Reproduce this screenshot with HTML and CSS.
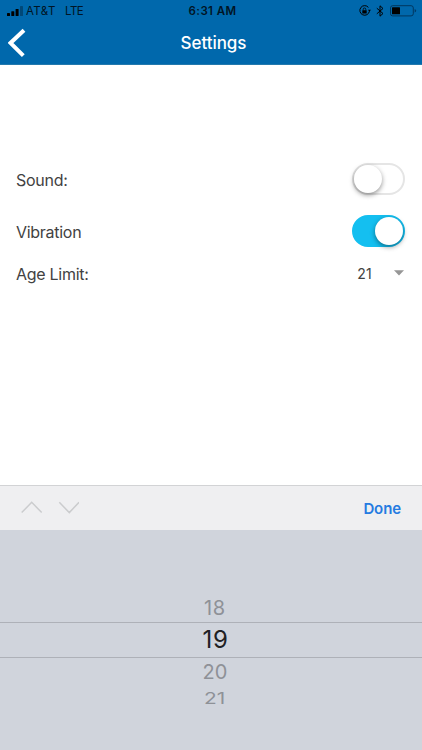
FILE: index.html
```html
<!DOCTYPE html>
<html lang="en">
<head>
<meta charset="utf-8">
<title>Settings</title>
<link rel="stylesheet" href="styles.css">
</head>
<body>
<div class="screen">
  <header class="header">
    <div class="status">
      <div class="carrier">
        <svg class="signal" width="17" height="11" viewBox="0 0 17 11"><rect x="0" y="7" width="3" height="3" rx=".6"/><rect x="4.3" y="5.2" width="3" height="4.8" rx=".6"/><rect x="8.6" y="3" width="3" height="7" rx=".6"/><rect x="13" y="0" width="3" height="10" rx=".6" opacity=".3"/></svg>
        <span class="network">AT&amp;T</span><span class="lte">LTE</span>
      </div>
      <time class="time">6:31 AM</time>
      <div class="indicators">
        <svg width="12" height="12" viewBox="0 0 12 12"><path d="M10.4 6.3A4.8 4.8 0 1 1 9.4 2.4" fill="none" stroke="#000" stroke-width="1"/><path d="M8.9 4.8h3L10.5 6.8z"/><rect x="3.3" y="5.2" width="4.4" height="3.4" rx=".4"/><path d="M4.2 5.4V4.3a1.3 1.3 0 0 1 2.6 0v1.1" fill="none" stroke="#000" stroke-width=".8"/></svg>
        <svg class="bluetooth" width="8" height="12" viewBox="0 0 8 12"><path d="M.8 3.2 7 8.5 4 11.2V.8L7 3.5.8 8.8" fill="none" stroke="#000" stroke-width="1"/></svg>
        <svg class="battery" width="27" height="12" viewBox="0 0 27 12"><rect x=".5" y=".7" width="22.8" height="10.2" rx="2.2" fill="none" stroke="#002b4b" stroke-width=".8"/><rect x="2" y="2.3" width="8" height="7" rx=".5"/><path d="M24.6 4v3.6q1.6-.5 1.6-1.8T24.6 4z" fill="#003b67"/></svg>
      </div>
    </div>
    <nav class="nav">
      <svg class="back" width="20" height="30" viewBox="0 0 20 30"><path d="M16 2.3 2.5 15 15.3 27.7" fill="none" stroke="#fff" stroke-width="4"/></svg>
      <h1 class="title">Settings</h1>
    </nav>
  </header>
  <main class="settings">
    <div class="row"><span class="label sound">Sound:</span><span class="toggle"><span class="knob"></span></span></div>
    <div class="row"><span class="label vibration">Vibration</span><span class="toggle on"><span class="knob"></span></span></div>
    <div class="row age"><span class="label limit">Age Limit:</span><span class="select">21<svg width="10" height="6" viewBox="0 0 10 6"><path d="M0 .3h10L5 5.5z" fill="#969696"/></svg></span></div>
  </main>
  <div class="toolbar">
    <svg width="58" height="14" viewBox="0 0 58 14"><path d="M.7 11.6 10.7 1.3l10 10.3M38.3 1.3l10 10.3L58 1.3" fill="none" stroke="#cbccce" stroke-width="1.5"/></svg>
    <span class="done">Done</span>
  </div>
  <div class="picker">
    <div class="option above">18</div>
    <div class="option selected">19</div>
    <div class="option below">20</div>
    <div class="option far"><span class="tilt">21</span></div>
  </div>
</div>
</body>
</html>
```
FILE: styles.css
```css
* { box-sizing: border-box; }
body { margin: 0; background: #fff; font-family: Inter, "Liberation Sans", sans-serif; }
.screen { width: 422px; height: 750px; display: flex; flex-direction: column; overflow: hidden; }
svg { display: block; flex: none; }
.header { height: 65px; flex: none; background: #0068ac; border-bottom: 1px solid #2379ad; }
.status { height: 22px; display: grid; grid-template-columns: 1fr auto 1fr; align-items: center; padding: 0 5px 0 7px; color: #001525; }
.carrier { display: flex; align-items: center; font-size: 11.5px; }
.signal { margin-right: 2px; }
.network { width: 39px; letter-spacing: .4px; }
.lte { letter-spacing: -.5px; }
.time { padding-left: 1px; font-size: 11.5px; font-weight: 600; letter-spacing: .4px; }
.indicators { display: flex; justify-content: flex-end; align-items: center; }
.bluetooth { margin-left: 5px; }
.battery { margin-left: 6px; }
.nav { height: 42px; display: grid; grid-template-columns: 20px 1fr 16px; align-items: center; padding: 0 7px 0 8px; }
.title { margin: 0; color: #fff; font-size: 17px; font-weight: 500; text-align: center; letter-spacing: -.05px; }
.settings { height: 420px; flex: none; padding: 88px 17px 0 16px; color: #424242; }
.row { height: 52px; display: flex; align-items: center; justify-content: space-between; }
.row.age { height: 34px; }
.label { padding-top: 1px; font-size: 16px; line-height: 20px; letter-spacing: -.28px; }
.limit { padding-top: 0; }
.toggle { width: 53px; height: 32px; display: flex; align-items: center; border: 2px solid #e5e5e5; border-radius: 16px; }
.toggle.on { justify-content: flex-end; background: #14bff0; border-color: #14bff0; }
.knob { width: 28px; height: 28px; border-radius: 50%; background: #fff; box-shadow: 0 2px 5px rgba(0,0,0,.42); }
.select { display: flex; align-items: center; gap: 22px; padding: 0 1px 2px 0; font-size: 14px; letter-spacing: .3px; }
.toolbar { height: 45px; flex: none; display: flex; align-items: center; justify-content: space-between; padding: 0 21px; background: #efeff1; border-top: 1px solid #d2d3d5; }
.done { color: #257be1; font-size: 15px; font-weight: 600; letter-spacing: -.1px; }
.picker { flex: 1; padding-top: 62px; background: #d0d4dc; text-align: center; }
.option { margin-left: 8px; color: #8e9197; }
.above { height: 30px; font-size: 20px; line-height: 32px; letter-spacing: .8px; }
.selected { height: 36px; margin-left: 0; padding-left: 9px; color: #202124; font-size: 24px; line-height: 34px; letter-spacing: .6px; border-top: 1px solid #aeb1b8; border-bottom: 1px solid #aeb1b8; }
.below { height: 28px; font-size: 20px; line-height: 28px; }
.far { height: 26px; font-size: 19px; line-height: 26px; }
.tilt { display: inline-block; transform: scale(1.1, .8); }
```
